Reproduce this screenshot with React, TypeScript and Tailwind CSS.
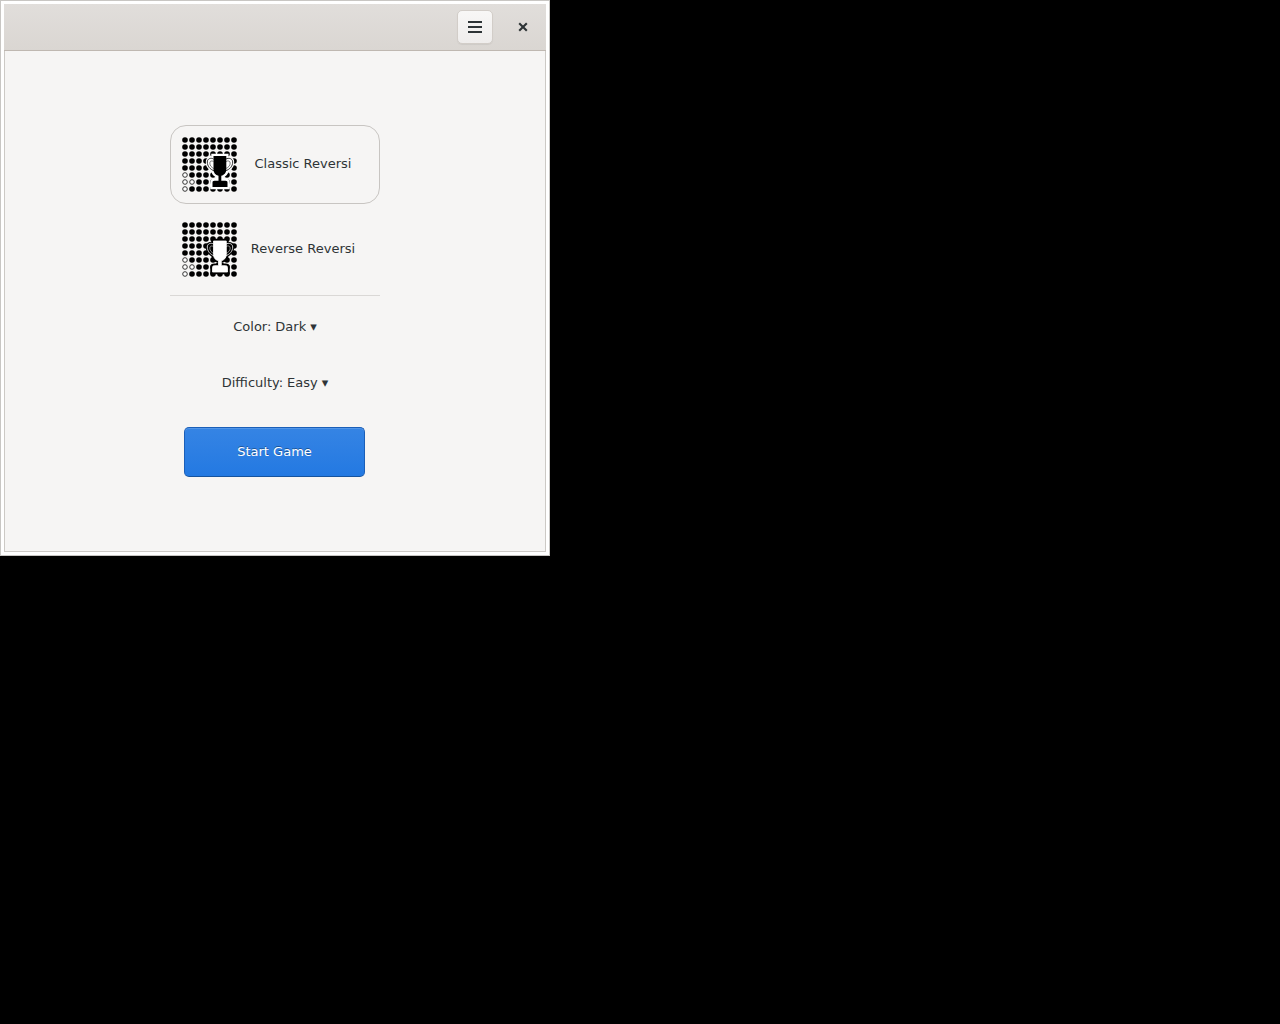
import { useState } from "react";

const cells = Array.from({ length: 64 }, (_, i) => ({ col: i % 8, row: Math.floor(i / 8) }));

function isHollow(col: number, row: number) {
  return (col === 0 && row >= 5) || (col === 1 && row === 6);
}

const handles =
  "M32.5 23C30 21.500 26.300 22.500 26.300 26C26.300 30 29 33.500 33.500 35M45 23C47.500 21.500 51.700 22.500 51.700 26C51.700 30 49 33.500 44 35";
const innerHandles =
  "M32.5 25.500C30.500 24.300 28.800 25 28.800 27C28.800 29.500 30.500 31.500 32.800 32.500M45 25.500C47 24.300 49.200 25 49.200 27C49.200 29.500 47.500 31.500 44.800 32.500";
const cup =
  "M32.5 20H45.300V33.500C45.300 37 43 39 40.300 39.700V44.700H44.500C46 44.700 46.500 45.500 46.500 46.500V51H31.500V46.500C31.500 45.500 32 44.700 33.500 44.700H37.500V39.700C34.500 39 32.500 37 32.500 33.500Z";

function ReversiIcon({ fill, halo, outline }: { fill: string; halo: string; outline: number }) {
  return (
    <svg viewBox="0 0 56 56" className="size-14 shrink-0 overflow-visible" aria-hidden="true">
      {cells.map(({ col, row }) =>
        isHollow(col, row) ? (
          <circle key={`${col}-${row}`} cx={4 + col * 7} cy={4 + row * 7} r="2.3" fill="#fff" stroke="#222" strokeWidth="0.9" />
        ) : (
          <circle key={`${col}-${row}`} cx={4 + col * 7} cy={4 + row * 7} r="2.8" fill="#000" />
        ),
      )}
      <path d={handles} fill={halo} stroke={halo} strokeWidth="3" />
      <path d={cup} fill={halo} stroke={halo} strokeWidth="4.500" />
      <path d={handles} fill="none" stroke={fill} strokeWidth="0.8" />
      <path d={innerHandles} fill="none" stroke={fill} strokeWidth="0.5" />
      <path d={cup} fill={fill} stroke={fill} strokeWidth={outline} />
    </svg>
  );
}

const modes = [
  { id: "classic", label: "Classic Reversi", fill: "#000", halo: "#fff", outline: 0 },
  { id: "reverse", label: "Reverse Reversi", fill: "#fff", halo: "#000", outline: 0.8 },
];

function Choice({ id, label, options }: { id: string; label: string; options: string[] }) {
  return (
    <div className="flex h-[50px] items-center justify-center gap-1">
      <label htmlFor={id}>{label}</label>
      <select id={id} className="cursor-pointer appearance-none bg-transparent p-0 field-sizing-content">
        {options.map((option) => (
          <option key={option}>{option}</option>
        ))}
      </select>
      <span aria-hidden="true">▾</span>
    </div>
  );
}

export default function App() {
  const [mode, setMode] = useState("classic");
  return (
    <div className="min-h-screen bg-black font-['DejaVu_Sans',sans-serif] text-[13px] leading-4 text-[#2e3436]">
      <div className="w-full max-w-[550px] border border-[#c8c6c3] bg-white p-[3px]">
        <header className="flex h-[47px] items-center justify-end gap-[13px] border-b border-[#bfb8b1] bg-linear-to-b from-[#e1dedb] to-[#dad6d2] pr-1.5">
          <button
            type="button"
            aria-label="Menu"
            className="flex h-[34px] w-9 items-center justify-center rounded-[5px] border border-[#d2cdc8] bg-linear-to-b from-[#f8f7f6] to-[#efedec] shadow-[0_1px_1px_rgba(0,0,0,0.06)]"
          >
            <svg viewBox="0 0 16 16" className="size-4" fill="#2e3436" aria-hidden="true">
              <path d="M1 2h14v2H1zM1 7h14v2H1zM1 12h14v2H1z" />
            </svg>
          </button>
          <button type="button" aria-label="Close" className="flex size-[34px] items-center justify-center">
            <svg viewBox="0 0 16 16" className="size-4" aria-hidden="true">
              <path d="M4.200 4.200l7.600 7.600M11.800 4.200l-7.600 7.600" stroke="#2e3436" strokeWidth="2.100" />
            </svg>
          </button>
        </header>
        <main className="border border-t-0 border-[#ccc9c5] bg-[#f6f5f4] py-[74px]">
          <form className="mx-auto flex w-[210px] flex-col gap-1.5" onSubmit={(e) => e.preventDefault()}>
            {modes.map((m) => (
              <label
                key={m.id}
                className="flex h-[79px] cursor-pointer items-center rounded-2xl border border-transparent px-2.5 pb-px has-checked:border-[#c8c5c2]"
              >
                <input
                  type="radio"
                  name="mode"
                  value={m.id}
                  checked={mode === m.id}
                  onChange={() => setMode(m.id)}
                  className="sr-only"
                />
                <ReversiIcon fill={m.fill} halo={m.halo} outline={m.outline} />
                <span className="flex-1 text-center">{m.label}</span>
              </label>
            ))}
            <hr className="border-t border-[#dad8d6]" />
            <Choice id="color" label="Color:" options={["Dark", "Light"]} />
            <Choice id="difficulty" label="Difficulty:" options={["Easy", "Medium", "Hard"]} />
            <button
              type="submit"
              className="mt-[13px] mr-[15px] ml-3.5 h-[50px] rounded-[5px] border border-[#1b5fb8] border-b-[#15539e] bg-linear-to-b from-[#3584e4] to-[#2379e2] text-white shadow-[inset_0_1px_rgba(255,255,255,0.15)] text-shadow-[0_-1px_rgba(0,0,0,0.35)]"
            >
              Start Game
            </button>
          </form>
        </main>
      </div>
    </div>
  );
}
